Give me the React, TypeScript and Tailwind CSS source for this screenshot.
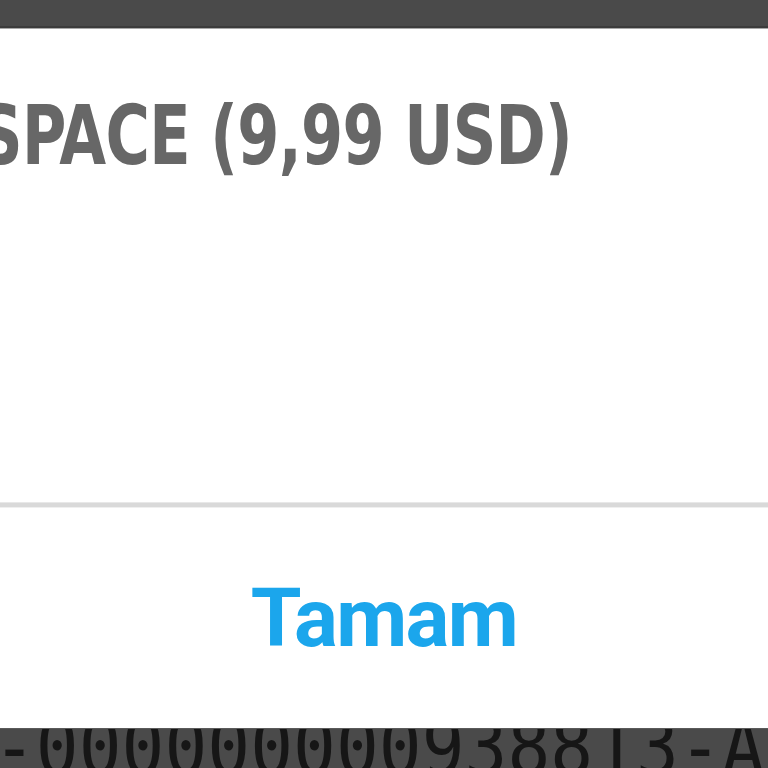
import React from 'react';

const TITLE_FONT = { fontFamily: '"Liberation Sans Narrow", "DejaVu Sans Condensed", "Roboto", sans-serif' };
const BUTTON_FONT = { fontFamily: 'Roboto, "Liberation Sans", sans-serif' };
const MONO_FONT = { fontFamily: '"DejaVu Sans Mono", "Liberation Mono", monospace' };

export default function App() {
  return (
    <div className="flex h-[768px] w-[768px] flex-col overflow-hidden bg-[#4a4a4a]">
      {/* status strip behind the dialog */}
      <div className="h-[26px] shrink-0 bg-[#4a4a4a]" />
      <div className="h-[2px] shrink-0 bg-[#3c3c3c]" />
      <div className="h-[1px] shrink-0 bg-[#a8a8a8]" />

      {/* dialog body */}
      <div className="flex h-[473px] shrink-0 flex-col overflow-hidden bg-white">
        <div className="mt-[57px] whitespace-nowrap">
          <span
            className="-ml-[21px] inline-block origin-left scale-x-[0.82] text-[82px] font-bold leading-[100px] tracking-[-0.01em] text-[#676767]"
            style={TITLE_FONT}
          >
            SPACE (9,99 USD)
          </span>
        </div>
      </div>

      {/* divider */}
      <div className="h-[1px] shrink-0 bg-[#e8e8e8]" />
      <div className="h-[4px] shrink-0 bg-[#d9d9d9]" />
      <div className="h-[1px] shrink-0 bg-[#efefef]" />

      {/* action */}
      <div className="flex h-[220px] shrink-0 items-center justify-center bg-white">
        <button
          className="text-[82px] font-bold leading-none tracking-[-0.02em] text-[#1ba6ec]"
          style={BUTTON_FONT}
        >
          Tamam
        </button>
      </div>

      {/* page behind, partly covered */}
      <div className="h-[40px] shrink-0 overflow-hidden border-t border-[#5a5a5a] bg-[#4a4a4a]">
        <div
          className="-ml-[7px] -mt-[21px] inline-block origin-left scale-x-[0.89] whitespace-nowrap text-[80px] leading-[80px] text-[#161616]"
          style={MONO_FONT}
        >
          -000000000938813-A9F2
        </div>
      </div>
    </div>
  );
}
